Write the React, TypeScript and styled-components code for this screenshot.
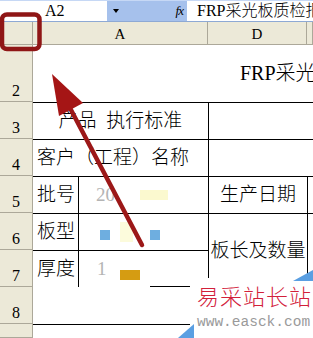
import React from "react";
import styled, { createGlobalStyle } from "styled-components";

const FONT = `"Liberation Serif", "Noto Sans CJK SC", serif`;

const Global = createGlobalStyle`
  html, body { margin: 0; padding: 0; background: #fff; overflow: hidden; }
  body { font-family: ${FONT}; color: #000; }
  * { box-sizing: border-box; }
`;

const Screen = styled.div`
  position: relative;
  width: 313px;
  height: 338px;
  overflow: hidden;
  background: #fff;
  display: flex;
  flex-direction: column;
`;

const FormulaBar = styled.div`
  display: flex;
  height: 22px;
  flex-shrink: 0;
  background: #a6c1ec;
  border-top: 1px solid #c6d8f5;
  border-bottom: 1px solid #8ea9d4;
`;

const NameBox = styled.div`
  width: 107px;
  background: #fff;
  padding-left: 45px;
  font-size: 16px;
  line-height: 20px;
`;

const DropZone = styled.div`
  width: 80px;
  display: flex;
  align-items: center;
  padding: 0 4px 0 6px;
`;

const DropArrow = styled.span`
  width: 0;
  height: 0;
  border-left: 3px solid transparent;
  border-right: 3px solid transparent;
  border-top: 4px solid #000;
`;

const Fx = styled.span`
  margin-left: auto;
  font-style: italic;
  font-size: 13px;
  line-height: 14px;
  letter-spacing: -1px;
`;

const FormulaInput = styled.div`
  flex: 1;
  background: #fff;
  padding-left: 10px;
  font-size: 16px;
  line-height: 20px;
  font-weight: 300;
  white-space: nowrap;
  overflow: hidden;
`;

const ColumnHeader = styled.div`
  display: grid;
  grid-template-columns: 33px 175px 99px 1fr;
  height: 23px;
  flex-shrink: 0;
  background: #ece9d8;
  border-bottom: 1px solid #aca899;
`;

const ColHead = styled.div`
  display: flex;
  align-items: flex-end;
  justify-content: center;
  padding-bottom: 2px;
  font-size: 15px;
  line-height: 16px;
  border-right: 1px solid #aca899;
`;

const Sheet = styled.div`
  flex: 1;
  display: grid;
  grid-template-columns: 33px 46px 129px 99px 1fr;
  grid-template-rows: 57px repeat(6, 37px) 1fr;
`;

const RowHead = styled.div<{ $row: number }>`
  grid-column: 1;
  grid-row: ${(p) => p.$row};
  background: #ece9d8;
  border-right: 1px solid #aca899;
  border-bottom: 1px solid #aca899;
  display: flex;
  align-items: flex-end;
  justify-content: center;
  padding-bottom: 2px;
  font-size: 16px;
  line-height: 17px;
`;

const Cell = styled.div<{
  $col: string;
  $row: string;
  $top?: boolean;
  $left?: boolean;
  $right?: boolean;
  $align?: string;
  $pl?: number;
}>`
  grid-column: ${(p) => p.$col};
  grid-row: ${(p) => p.$row};
  display: flex;
  align-items: center;
  justify-content: ${(p) => p.$align || "flex-start"};
  padding-left: ${(p) => p.$pl || 0}px;
  border-top: ${(p) => (p.$top ? "1px solid #000" : "none")};
  border-left: ${(p) => (p.$left ? "1px solid #000" : "none")};
  border-right: ${(p) => (p.$right ? "1px solid #000" : "none")};
  font-size: 19px;
  line-height: 22px;
  font-weight: 300;
  white-space: nowrap;
  overflow: hidden;
`;

const TailCell = styled(Cell)`
  background: linear-gradient(#000, #000) no-repeat right bottom / 58px 1px;
`;

const Title = styled.div`
  grid-column: 2 / 6;
  grid-row: 1;
  padding: 16px 0 0 207px;
  font-size: 20px;
  line-height: 24px;
  font-weight: 300;
  white-space: nowrap;
  overflow: hidden;
`;

const Spaced = styled.span`
  word-spacing: 5px;
`;

const Faded = styled.span`
  color: #b4b4b4;
`;

const Swatch = styled.span<{ $w: number; $h: number; $c: string; $ml: number; $dy?: number }>`
  display: inline-block;
  flex-shrink: 0;
  width: ${(p) => p.$w}px;
  height: ${(p) => p.$h}px;
  margin-left: ${(p) => p.$ml}px;
  background: ${(p) => p.$c};
  transform: translateY(${(p) => p.$dy || 0}px);
`;

const Overlay = styled.svg`
  position: absolute;
  left: 0;
  top: 0;
  pointer-events: none;
`;

const Watermark = styled.div`
  position: absolute;
  left: 190px;
  top: 278px;
  width: 123px;
  height: 60px;
  background: #fff;
  display: flex;
  flex-direction: column;
  padding: 4px 0 0 7px;

  &::before {
    content: "";
    position: absolute;
    left: -12px;
    bottom: 0;
    width: 0;
    height: 0;
    border-left: 16px solid transparent;
    border-bottom: 14px solid #5a9fe2;
  }

  &::after {
    content: "";
    position: absolute;
    right: 0;
    top: -8px;
    width: 0;
    height: 0;
    border-left: 20px solid transparent;
    border-bottom: 11px solid #5a9fe2;
  }
`;

const WmTitle = styled.div`
  color: #d2203a;
  font-family: "Noto Sans CJK SC", serif;
  font-size: 22px;
  line-height: 26px;
  font-weight: 300;
  letter-spacing: 1px;
  white-space: nowrap;
`;

const WmUrl = styled.div`
  margin-top: 6px;
  color: #9a9a9a;
  font-family: "Liberation Mono", monospace;
  font-size: 14.5px;
  line-height: 16px;
  white-space: nowrap;
`;

export default function App() {
  return (
    <>
      <Global />
      <Screen>
        <FormulaBar>
          <NameBox>A2</NameBox>
          <DropZone>
            <DropArrow />
            <Fx>fx</Fx>
          </DropZone>
          <FormulaInput>FRP采光板质检报告</FormulaInput>
        </FormulaBar>
        <ColumnHeader>
          <ColHead />
          <ColHead>A</ColHead>
          <ColHead>D</ColHead>
          <ColHead />
        </ColumnHeader>
        <Sheet>
          {[2, 3, 4, 5, 6, 7, 8, 9].map((n, i) => (
            <RowHead key={n} $row={i + 1}>
              {n < 9 ? n : ""}
            </RowHead>
          ))}

          <Title>FRP采光板质检报告</Title>

          <Cell $col="2 / 4" $row="2" $top $align="center">
            <Spaced>产品 执行标准</Spaced>
          </Cell>
          <Cell $col="4" $row="2" $top $left />
          <Cell $col="5" $row="2" $top />

          <Cell $col="2 / 4" $row="3" $top $pl={4}>
            客户（工程）名称
          </Cell>
          <Cell $col="4" $row="3" $top $left />
          <Cell $col="5" $row="3" $top />

          <Cell $col="2" $row="4" $top $right $pl={4}>
            批号
          </Cell>
          <Cell $col="3" $row="4" $top $pl={17}>
            <Faded>20</Faded>
            <Swatch $w={28} $h={10} $c="#fbf9cf" $ml={25} />
          </Cell>
          <Cell $col="4" $row="4" $top $left $align="center">
            生产日期
          </Cell>
          <Cell $col="5" $row="4" $top $left />

          <Cell $col="2" $row="5" $top $right $pl={4}>
            板型
          </Cell>
          <Cell $col="3" $row="5" $top $pl={21}>
            <Swatch $w={10} $h={10} $c="#6eaee0" $ml={0} $dy={3} />
            <Swatch $w={13} $h={20} $c="#fcfbdc" $ml={10} />
            <Swatch $w={10} $h={10} $c="#6eaee0" $ml={17} $dy={3} />
          </Cell>
          <Cell $col="4" $row="5 / 7" $top $left $align="center">
            板长及数量
          </Cell>
          <Cell $col="5" $row="5 / 7" $top $left />

          <Cell $col="2" $row="6" $top $right $pl={4}>
            厚度
          </Cell>
          <TailCell $col="3" $row="6" $top $pl={18}>
            <Faded>1</Faded>
            <Swatch $w={20} $h={10} $c="#d59c12" $ml={13} $dy={6} />
          </TailCell>

          <Cell $col="2 / 6" $row="8" $top />
        </Sheet>

        <Overlay width="313" height="338" viewBox="0 0 313 338">
          <rect x="2" y="14.5" width="37.5" height="34.5" rx="5" fill="none" stroke="#8f1616" strokeWidth="4.5" />
          <line x1="142" y1="245" x2="70" y2="108" stroke="#9c1818" strokeWidth="4.5" strokeLinecap="round" />
          <polygon points="52,74 59,116 83,103" fill="#a51515" />
        </Overlay>

        <Watermark>
          <WmTitle>易采站长站</WmTitle>
          <WmUrl>www.easck.com</WmUrl>
        </Watermark>
      </Screen>
    </>
  );
}
